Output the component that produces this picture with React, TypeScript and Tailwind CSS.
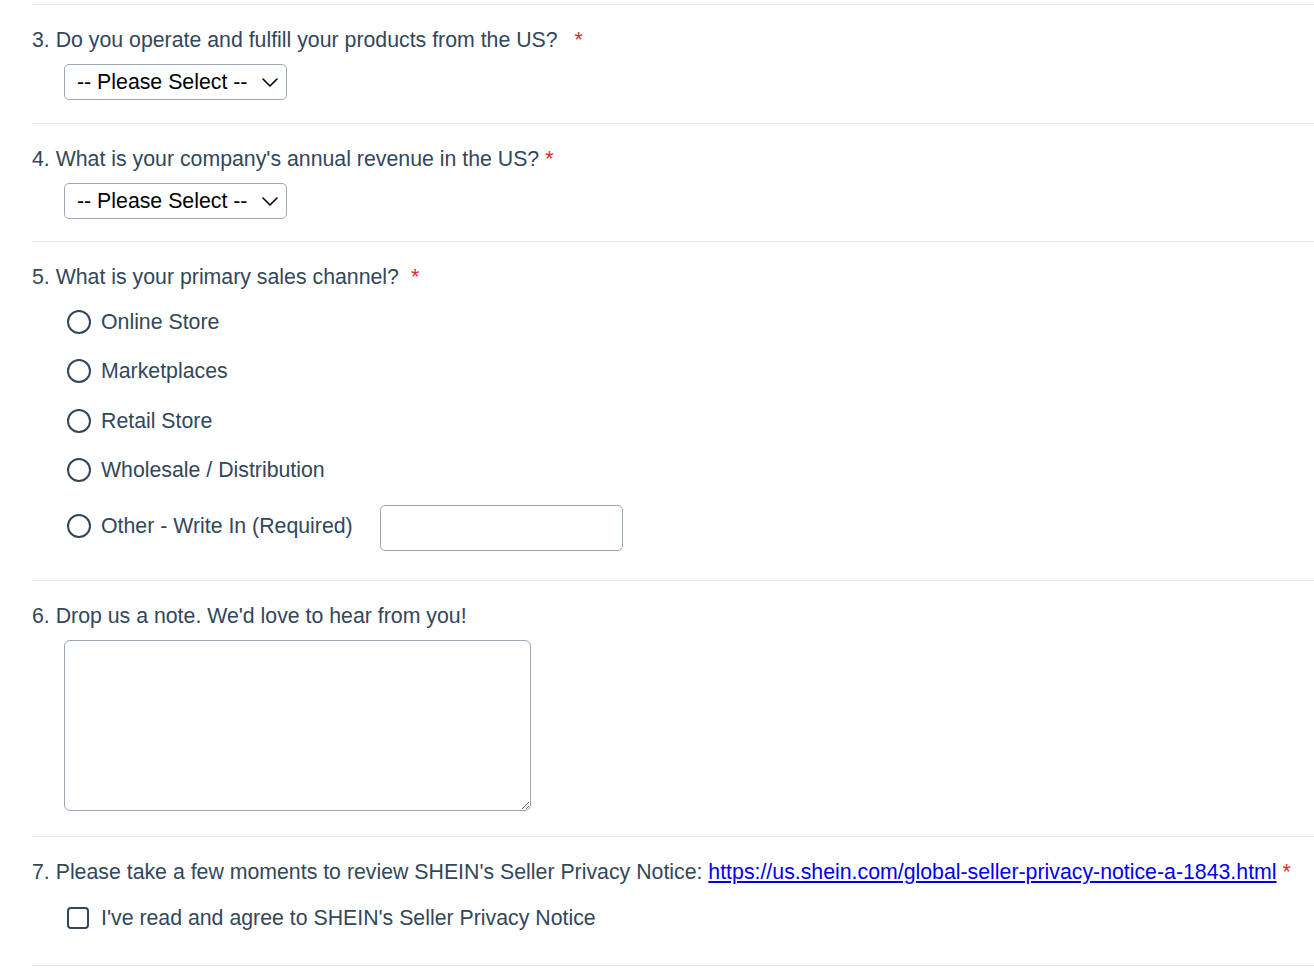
import { ReactNode } from "react"

const font = { fontFamily: '"Liberation Sans", Arial, Helvetica, sans-serif' }

function Req({ gap = "ml-[6px]" }: { gap?: string }) {
  return <span className={`text-[#e3262f] ${gap}`}>*</span>
}

function Section({ children, className = "" }: { children: ReactNode; className?: string }) {
  return <div className={`border-t border-[#e7e7e7] pt-[23px] ${className}`}>{children}</div>
}

function Label({ children }: { children: ReactNode }) {
  return <div className="text-[21.3px] leading-[24px] text-[#33475b]">{children}</div>
}

function Select() {
  return (
    <div className="ml-8 mt-3 w-[223px] h-[36px] border-[1.5px] border-[#9fa8b2] rounded-[5px] flex items-center justify-between pl-[12px] pr-[8px] bg-white">
      <span className="text-[21.3px] text-black leading-none pt-[2px]">-- Please Select --</span>
      <svg width="16" height="9" viewBox="0 0 16 9" fill="none">
        <path d="M1 1l7 7 7-7" stroke="#000" strokeWidth="1.6" strokeLinecap="round" strokeLinejoin="round" />
      </svg>
    </div>
  )
}

function Radio({ label }: { label: string }) {
  return (
    <div className="flex items-center h-[49.5px]">
      <span className="w-[24px] h-[24px] rounded-full border-2 border-[#33475b] shrink-0" />
      <span className="ml-[10px] text-[21.3px] text-[#33475b] leading-[24px]">{label}</span>
    </div>
  )
}

export default function App() {
  const channels = ["Online Store", "Marketplaces", "Retail Store", "Wholesale / Distribution"]
  return (
    <main className="min-h-screen bg-white pl-8 pt-[4px]" style={font}>
      <Section className="pb-[23px]">
        <Label>3. Do you operate and fulfill your products from the US?<Req gap="ml-[17px]" /></Label>
        <Select />
      </Section>

      <Section className="pb-[22px]">
        <Label>4. What is your company's annual revenue in the US?<Req /></Label>
        <Select />
      </Section>

      <Section className="pb-[29px]">
        <Label>5. What is your primary sales channel?<Req gap="ml-[12px]" /></Label>
        <div className="ml-[35px] mt-[8px] flex flex-col">
          {channels.map((c) => <Radio key={c} label={c} />)}
          <div className="flex items-center mt-[10px]">
            <span className="w-[24px] h-[24px] rounded-full border-2 border-[#33475b] shrink-0 -mt-[5px]" />
            <span className="ml-[10px] text-[21.3px] text-[#33475b] leading-[24px] -mt-[5px]">Other - Write In (Required)</span>
            <input className="ml-[27px] w-[243px] h-[46px] border-[1.5px] border-[#9fa8b2] rounded-[5px] outline-none" />
          </div>
        </div>
      </Section>

      <Section className="pb-[25px]">
        <Label>6. Drop us a note. We'd love to hear from you!</Label>
        <textarea className="block ml-8 mt-3 w-[467px] h-[171px] border-[1.5px] border-[#9fa8b2] rounded-[6px] outline-none resize" />
      </Section>

      <Section className="pb-[35px]">
        <Label>
          7. Please take a few moments to review SHEIN's Seller Privacy Notice:{" "}
          <a href="#" className="text-[#0000ee] underline">https://us.shein.com/global-seller-privacy-notice-a-1843.html</a>
          <Req />
        </Label>
        <div className="ml-[35px] mt-[22px] flex items-center h-[24px]">
          <span className="w-[22px] h-[22px] rounded-[4px] border-2 border-[#33475b] shrink-0" />
          <span className="ml-[12px] text-[21.3px] text-[#33475b] leading-[24px]">I've read and agree to SHEIN's Seller Privacy Notice</span>
        </div>
      </Section>

      <div className="border-t border-[#e7e7e7]" />
    </main>
  )
}
